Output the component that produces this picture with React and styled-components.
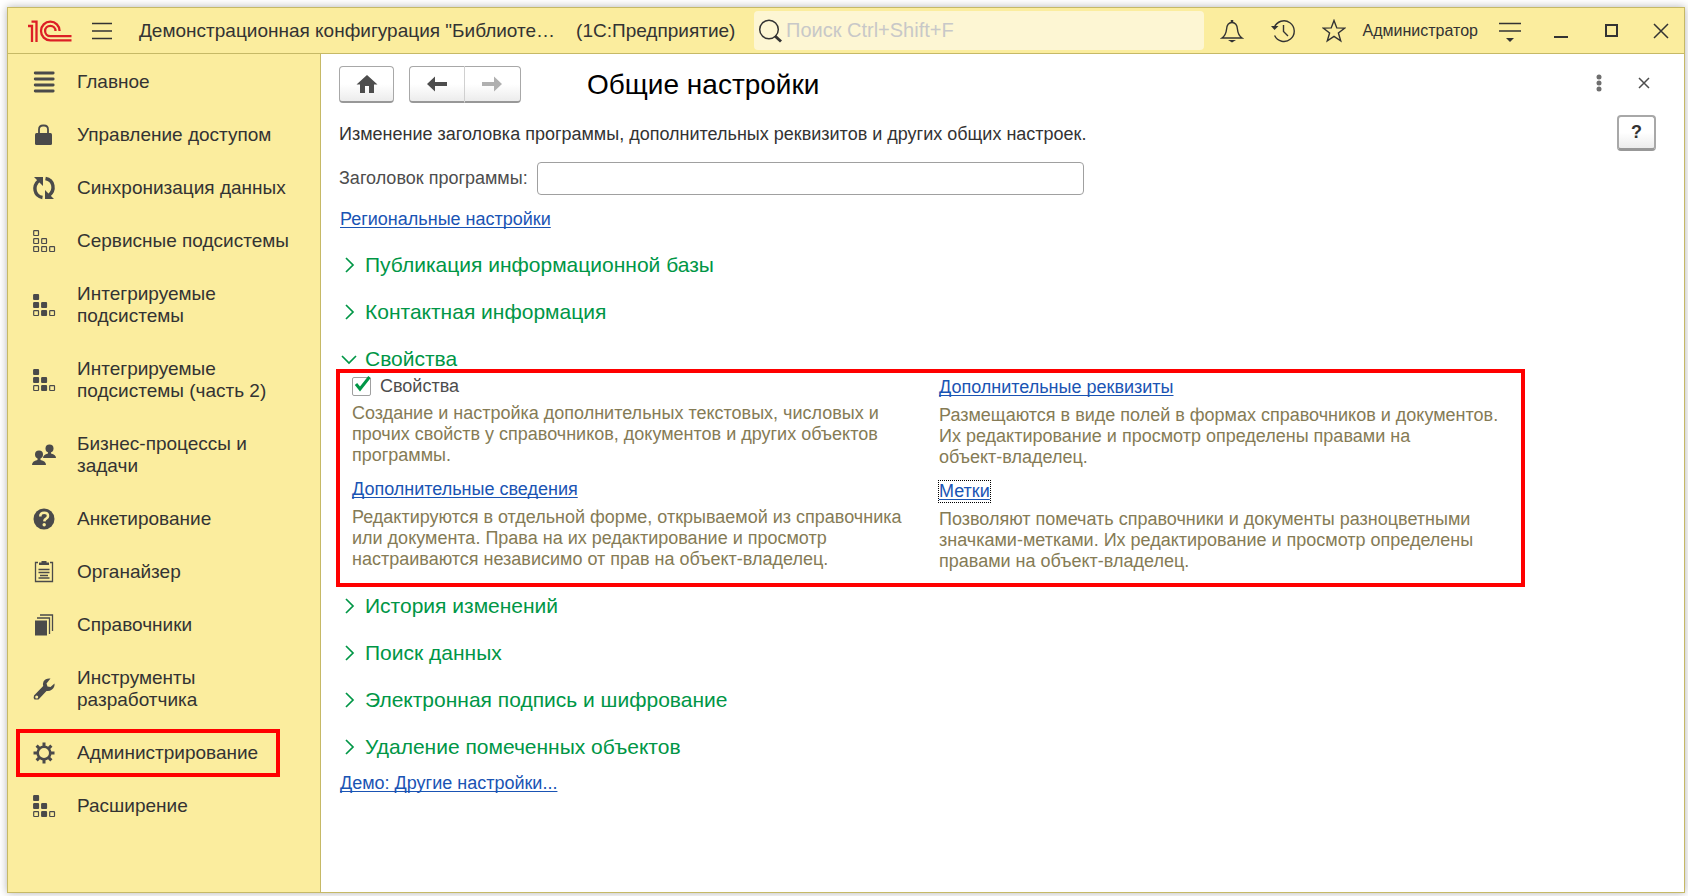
import React, { useState } from 'react';
import styled, { createGlobalStyle } from 'styled-components';

const GlobalStyle = createGlobalStyle`
  * {
    box-sizing: border-box;
  }
  html, body, #root {
    height: 100%;
  }
  body {
    margin: 0;
    background: #fff;
    font-family: "Liberation Sans", Arial, sans-serif;
    color: #333;
  }
  button, input {
    font-family: inherit;
    color: inherit;
  }
`;

const Desktop = styled.div`
  display: flex;
  min-height: 100%;
  padding: 7px 3px 3px 7px;
`;

const Window = styled.div`
  flex: 1;
  min-width: 0;
  display: flex;
  flex-direction: column;
  border: 1px solid #c6b966;
  background: #fff;
  box-shadow: 0 0 8px rgba(0, 0, 0, 0.3);
`;

const TitleBar = styled.header`
  display: flex;
  align-items: center;
  height: 46px;
  padding-left: 20px;
  background: #fbed9e;
  border-bottom: 1px solid #c6b966;
`;

const BarButton = styled.button`
  flex: none;
  display: flex;
  align-items: center;
  justify-content: center;
  width: ${(props) => props.$width || 51}px;
  height: 39px;
  padding: 0;
  border: 0;
  background: none;
`;

const AppTitle = styled.div`
  display: flex;
  gap: 21px;
  width: 602px;
  margin-left: 7px;
  font-size: 19px;
  line-height: 24px;
  white-space: nowrap;
`;

const Search = styled.label`
  flex: 1;
  display: flex;
  align-items: center;
  gap: 4px;
  height: 39px;
  margin-left: 13px;
  margin-right: 3px;
  padding-left: 4px;
  border-radius: 4px;
  background: #fdf6d3;
  input {
    flex: 1;
    min-width: 0;
    padding: 0;
    border: 0;
    outline: 0;
    background: none;
    font-size: 20px;
  }
  input::placeholder {
    color: #c8c8c8;
    opacity: 1;
  }
`;

const UserLink = styled.a`
  margin: 0 6px 0 3px;
  color: #333;
  font-size: 16px;
  text-decoration: none;
`;

const Body = styled.div`
  flex: 1;
  display: flex;
`;

const Sidebar = styled.nav`
  flex: none;
  display: flex;
  flex-direction: column;
  align-items: flex-start;
  gap: 13px;
  width: 313px;
  padding: 8px 0 8px 12px;
  background: #fbed9e;
  border-right: 1px solid #c6b966;
`;

const NavItem = styled.button`
  display: flex;
  align-items: center;
  gap: 21px;
  padding: 9px 18px 9px 12px;
  border: 0;
  background: none;
  font-size: 19px;
  line-height: 22px;
  text-align: left;
  outline: ${(props) => (props.$active ? '4px solid #f00' : 'none')};
  svg {
    flex: none;
    margin: -1px 0;
  }
`;

const Content = styled.main`
  flex: 1;
  min-width: 0;
  padding: 12px 28px 12px 18px;
`;

const PageHeader = styled.div`
  display: flex;
  align-items: center;
  height: 37px;
  margin-right: -10px;
`;

const ToolButton = styled.button`
  display: flex;
  align-items: center;
  justify-content: center;
  width: 55px;
  height: 37px;
  padding: 0;
  border: 1px solid #a8a8a8;
  border-bottom: 2px solid #989898;
  border-radius: 4px;
  background: linear-gradient(#fff 50%, #ececec);
`;

const HistoryButtons = styled.div`
  display: flex;
  margin: 0 66px 0 15px;
  ${ToolButton} {
    width: 56px;
  }
  ${ToolButton}:first-child {
    border-right-color: #d0d0d0;
    border-radius: 4px 0 0 4px;
  }
  ${ToolButton}:last-child {
    border-left: 0;
    border-radius: 0 4px 4px 0;
  }
`;

const PageTitle = styled.h1`
  flex: 1;
  margin: 0;
  color: #000;
  font-size: 28px;
  font-weight: normal;
  line-height: 32px;
`;

const PageAction = styled(BarButton)`
  width: 45px;
  height: 34px;
  align-self: flex-start;
`;

const Intro = styled.div`
  display: flex;
  justify-content: space-between;
  height: 36px;
  margin-top: 12px;
  font-size: 18px;
  line-height: 21px;
  p {
    margin: 9px 0 0;
  }
`;

const HelpButton = styled(ToolButton)`
  width: 39px;
  height: 36px;
  border-width: 2px;
  border-bottom-width: 3px;
  font-size: 18px;
  font-weight: bold;
`;

const Field = styled.div`
  display: flex;
  align-items: center;
  gap: 9px;
  margin-top: 11px;
  color: #4d4d4d;
  font-size: 18px;
  input {
    width: 547px;
    height: 33px;
    padding: 0 8px;
    border: 1px solid #a0a0a0;
    border-radius: 4px;
    font-size: 18px;
  }
`;

const TextLink = styled.a`
  color: #1a54b4;
  font-size: 18px;
  line-height: 21px;
  text-decoration: underline;
  text-decoration-thickness: 1px;
  text-decoration-skip-ink: none;
  text-underline-offset: 2px;
  outline: ${(props) => (props.$focused ? '1px dotted #000' : 'none')};
`;

const LinkRow = styled.div`
  display: flex;
  margin-top: ${(props) => props.$top}px;
  padding-left: 1px;
`;

const Sections = styled.div`
  display: flex;
  flex-direction: column;
  gap: 27px;
  margin-top: ${(props) => props.$top}px;
`;

const SectionButton = styled.button`
  display: flex;
  align-items: center;
  gap: 7px;
  height: 20px;
  padding: 0 0 0 1px;
  border: 0;
  background: none;
  color: #009646;
  font-size: 21px;
  line-height: 20px;
`;

const Group = styled.section`
  display: grid;
  grid-template-columns: 587px 1fr;
  width: 1189px;
  max-width: 100%;
  height: 218px;
  margin-left: -3px;
  padding: 3px 12px 0;
  border: 4px solid #f00;
`;

const Column = styled.div`
  display: flex;
  flex-direction: column;
  align-items: flex-start;
  padding-top: ${(props) => props.$top || 0}px;
`;

const Note = styled.p`
  margin: 7px 0 13px;
  color: #857b55;
  font-size: 18px;
  line-height: 21px;
  white-space: pre-line;
`;

const CheckLabel = styled.label`
  display: flex;
  align-items: center;
  gap: 9px;
  height: 20px;
  color: #4d4d4d;
  font-size: 18px;
  line-height: 20px;
`;

const CheckBox = styled.input`
  appearance: none;
  width: 19px;
  height: 19px;
  margin: 0;
  border: 1px solid #a0a0a0;
  border-radius: 2px;
  background: #fff;
`;

const CheckWrap = styled.span`
  position: relative;
  display: flex;
  svg {
    position: absolute;
    left: 2px;
    top: -2px;
    pointer-events: none;
  }
`;

const ink = '#4a4a4a';

function Squares({ filled }) {
  const cells = [[0, 0], [0, 1], [1, 1], [0, 2], [1, 2], [2, 2]];
  const solid = filled ? [0, 1, 2, 4] : [];
  return (
    <svg width="24" height="24" viewBox="0 0 24 24">
      {cells.map(([x, y], i) => (
        <rect
          key={i}
          x={1.7 + x * 8}
          y={1.7 + y * 8}
          width="4.8"
          height="4.8"
          rx="0.5"
          stroke={ink}
          strokeWidth="1.2"
          fill={solid.includes(i) ? ink : 'none'}
        />
      ))}
    </svg>
  );
}

const icons = {
  lines: (
    <svg width="24" height="24" viewBox="0 0 24 24" stroke={ink} strokeWidth="2.8" strokeLinecap="round">
      <path d="M3.2 3h18M3.2 9h18M3.2 15h18M3.2 21h18" />
    </svg>
  ),
  lock: (
    <svg width="24" height="24" viewBox="0 0 24 24">
      <rect x="3" y="10" width="17" height="12" rx="1.5" fill={ink} />
      <path d="M7 11V6.5q0-4 4-4h1q4 0 4 4V11" fill="none" stroke={ink} strokeWidth="1.8" />
    </svg>
  ),
  sync: (
    <svg width="24" height="24" viewBox="0 0 24 24" fill="none" stroke={ink} strokeWidth="3.4">
      <path d="M10.5 21.5C2 20 .5 10 7 4.5M13.5 2.5C22 4 23.5 14 17 19.5" />
      <path d="M2 1h9v9zM22 23h-9v-9z" fill={ink} stroke="none" />
    </svg>
  ),
  squares: <Squares />,
  blocks: <Squares filled />,
  people: (
    <svg width="24" height="24" viewBox="0 0 24 24" fill={ink}>
      <circle cx="17.5" cy="5.5" r="4" />
      <path d="M11 15q0-3.5 5-4.5V8h3v2.5q5 1 5 4.5z" />
      <circle cx="7" cy="11.5" r="4" />
      <path d="M0 22q0-4 5.5-5v-3h3v3q5.5 1 5.5 5z" />
    </svg>
  ),
  question: (
    <svg width="24" height="24" viewBox="0 0 24 24">
      <circle cx="12" cy="12" r="10.5" fill={ink} />
      <path d="M8.3 9.5q0-3.7 3.9-3.7t3.8 3.2q0 1.7-1.8 2.7t-1.9 2.6" fill="none" stroke="#fbed9e" strokeWidth="2.6" />
      <circle cx="12.2" cy="17.7" r="1.7" fill="#fbed9e" />
    </svg>
  ),
  clipboard: (
    <svg width="24" height="24" viewBox="0 0 24 24" fill="none" stroke={ink} strokeWidth="1.3">
      <path d="M6 2.5H3.5v19h17v-19H18" />
      <path d="M7 5V2.5h2.5V1h5v1.5H17V5z" fill={ink} stroke="none" />
      <path d="M6.5 9.5h11M6.5 12.5h11M8 15.5h8M6.5 18h11" />
    </svg>
  ),
  books: (
    <svg width="24" height="24" viewBox="0 0 24 24" fill="none" stroke={ink} strokeWidth="1.3">
      <rect x="3" y="7.5" width="12" height="15" fill={ink} stroke="none" />
      <path d="M5 5h12.5v16M8 2h12.5v16" />
    </svg>
  ),
  wrench: (
    <svg width="24" height="24" viewBox="0 0 24 24">
      <path
        d="M18.5 1.5q-5-.5-7 3-1 2.500-.3 4.500L2 18.500q-1 3 .5 4h4l8-8.500q3 .5 5.500-1.500 3-2.500 2.500-6l-4 3.500-3-.5-1-3z"
        fill={ink}
      />
      <circle cx="4.7" cy="20" r="1.5" fill="#fbed9e" />
    </svg>
  ),
  gear: (
    <svg width="24" height="24" viewBox="0 0 24 24" fill="none" stroke={ink}>
      <circle cx="12" cy="12" r="6.3" strokeWidth="2.6" />
      <path
        d="M12 1.5v4M12 18.5v4M1.5 12h4M18.5 12h4M4.6 4.6l2.8 2.8M16.6 16.6l2.8 2.8M19.4 4.6l-2.8 2.8M7.4 16.6l-2.8 2.8"
        strokeWidth="3"
      />
    </svg>
  ),
};

const menu = [
  { icon: 'lines', text: 'Главное' },
  { icon: 'lock', text: 'Управление доступом' },
  { icon: 'sync', text: 'Синхронизация данных' },
  { icon: 'squares', text: 'Сервисные подсистемы' },
  { icon: 'blocks', text: 'Интегрируемые подсистемы' },
  { icon: 'blocks', text: 'Интегрируемые подсистемы (часть 2)' },
  { icon: 'people', text: 'Бизнес-процессы и задачи' },
  { icon: 'question', text: 'Анкетирование' },
  { icon: 'clipboard', text: 'Органайзер' },
  { icon: 'books', text: 'Справочники' },
  { icon: 'wrench', text: 'Инструменты разработчика' },
  { icon: 'gear', text: 'Администрирование', active: true },
  { icon: 'blocks', text: 'Расширение' },
];

function Logo() {
  return (
    <svg width="44" height="24" viewBox="0 0 44 24" fill="none" stroke="#dc1f26" strokeWidth="2.3">
      <path d="M0 7h4v16M3.5 2.7h5V23" />
      <path d="M31.6 12a9.3 9.3 0 1 0-9.3 9.3H43.5M27.5 12a5.2 5.2 0 1 0-5.2 5.2H43.5" />
    </svg>
  );
}

function Section({ title, open }) {
  return (
    <SectionButton type="button" aria-expanded={Boolean(open)}>
      <svg width="18" height="18" viewBox="0 0 18 18" fill="none" stroke="#009646" strokeWidth="1.7">
        <path d={open ? 'M2 6l7 7 7-7' : 'M6 2l7 7-7 7'} />
      </svg>
      {title}
    </SectionButton>
  );
}

function Header() {
  return (
    <TitleBar>
      <Logo />
      <BarButton $width={60} aria-label="Меню">
        <svg width="22" height="18" viewBox="0 0 22 18" stroke="#333" strokeWidth="1.4">
          <path d="M1 1.5h20M1 9h20M1 16.5h20" />
        </svg>
      </BarButton>
      <AppTitle>
        <span>Демонстрационная конфигурация "Библиоте…</span>
        <span>(1С:Предприятие)</span>
      </AppTitle>
      <Search>
        <svg width="24" height="24" viewBox="0 0 24 24" fill="none" stroke="#333">
          <circle cx="11" cy="10.5" r="9.3" strokeWidth="1.5" />
          <path d="M17 17l6 5.5" strokeWidth="3" />
        </svg>
        <input type="text" placeholder="Поиск Ctrl+Shift+F" aria-label="Поиск" />
      </Search>
      <BarButton aria-label="Уведомления">
        <svg width="24" height="24" viewBox="0 0 24 24" fill="none" stroke="#333" strokeWidth="1.4">
          <path d="M2 19q4-3 4.5-8.5Q7 3.5 12 3.5t5.5 7Q18 16 22 19z" />
          <path d="M12 1v2.5" strokeWidth="2.5" />
          <path d="M8 21h8l-4 2.5z" fill="#333" stroke="none" />
        </svg>
      </BarButton>
      <BarButton aria-label="История">
        <svg width="24" height="24" viewBox="0 0 24 24" fill="none" stroke="#333" strokeWidth="1.4">
          <path d="M3.3 8.5a10.3 10.3 0 1 1 .3 8" />
          <path d="M12.5 6v6.5l4.5 4.5" />
          <path d="M0 7h7.5L3.5 11z" fill="#333" stroke="none" />
        </svg>
      </BarButton>
      <BarButton aria-label="Избранное">
        <svg width="24" height="24" viewBox="0 0 24 24" fill="none" stroke="#333" strokeWidth="1.4">
          <path d="M12 1.5l2.8 7.4 8 .2-6.4 4.9 2.3 7.8L12 17.3l-6.7 4.5 2.3-7.8-6.4-4.9 8-.2z" />
        </svg>
      </BarButton>
      <UserLink href="#user">Администратор</UserLink>
      <BarButton aria-label="Сервис">
        <svg width="24" height="24" viewBox="0 0 24 24" fill="none" stroke="#333" strokeWidth="1.5">
          <path d="M1 4.5h22M1 12h22" />
          <path d="M8 19h8l-4 4z" fill="#333" stroke="none" />
        </svg>
      </BarButton>
      <BarButton aria-label="Свернуть">
        <svg width="16" height="16" viewBox="0 0 16 16" stroke="#333" strokeWidth="2">
          <path d="M1 14h14" />
        </svg>
      </BarButton>
      <BarButton aria-label="Развернуть">
        <svg width="16" height="16" viewBox="0 0 16 16" fill="none" stroke="#333" strokeWidth="2">
          <path d="M2 2h11v11H2z" />
        </svg>
      </BarButton>
      <BarButton $width={47} aria-label="Закрыть">
        <svg width="16" height="16" viewBox="0 0 16 16" stroke="#333" strokeWidth="1.5">
          <path d="M1 1l14 14M15 1L1 15" />
        </svg>
      </BarButton>
    </TitleBar>
  );
}

function PropertiesGroup() {
  const [enabled, setEnabled] = useState(true);

  return (
    <Group>
      <Column>
        <CheckLabel>
          <CheckWrap>
            <CheckBox type="checkbox" checked={enabled} onChange={(e) => setEnabled(e.target.checked)} />
            {enabled && (
              <svg width="18" height="18" viewBox="0 0 18 18" fill="none" stroke="#009646" strokeWidth="3">
                <path d="M2 9l4 5L15.5 2" />
              </svg>
            )}
          </CheckWrap>
          Свойства
        </CheckLabel>
        <Note>
          {'Создание и настройка дополнительных текстовых, числовых и\nпрочих свойств у справочников, документов и других объектов\nпрограммы.'}
        </Note>
        <TextLink href="#info">Дополнительные сведения</TextLink>
        <Note>
          {'Редактируются в отдельной форме, открываемой из справочника\nили документа. Права на их редактирование и просмотр\nнастраиваются независимо от прав на объект-владелец.'}
        </Note>
      </Column>
      <Column $top={1}>
        <TextLink href="#attributes">Дополнительные реквизиты</TextLink>
        <Note>
          {'Размещаются в виде полей в формах справочников и документов.\nИх редактирование и просмотр определены правами на\nобъект-владелец.'}
        </Note>
        <TextLink href="#labels" $focused>Метки</TextLink>
        <Note>
          {'Позволяют помечать справочники и документы разноцветными\nзначками-метками. Их редактирование и просмотр определены\nправами на объект-владелец.'}
        </Note>
      </Column>
    </Group>
  );
}

export default function App() {
  return (
    <Desktop>
      <GlobalStyle />
      <Window>
        <Header />
        <Body>
          <Sidebar>
            {menu.map((item) => (
              <NavItem key={item.text} type="button" $active={item.active}>
                {icons[item.icon]}
                <span>{item.text}</span>
              </NavItem>
            ))}
          </Sidebar>
          <Content>
            <PageHeader>
              <ToolButton aria-label="Начальная страница">
                <svg width="22" height="20" viewBox="0 0 22 20" fill="#4d4d4d">
                  <path d="M11 1l10.5 9.5H18V19h-5v-7H9v7H4v-8.5H.5z" />
                </svg>
              </ToolButton>
              <HistoryButtons>
                <ToolButton aria-label="Назад">
                  <svg width="22" height="16" viewBox="0 0 22 16" fill="#4d4d4d">
                    <path d="M1 8l8-7.5V6h12v4H9v5.5z" />
                  </svg>
                </ToolButton>
                <ToolButton aria-label="Вперед">
                  <svg width="22" height="16" viewBox="0 0 22 16" fill="#b0b0b0">
                    <path d="M20 8l-8-7.5V6H0v4h12v5.5z" />
                  </svg>
                </ToolButton>
              </HistoryButtons>
              <PageTitle>Общие настройки</PageTitle>
              <PageAction aria-label="Еще">
                <svg width="6" height="18" viewBox="0 0 6 18" fill="#6e6e6e">
                  <circle cx="3" cy="3" r="2.5" />
                  <circle cx="3" cy="9" r="2.5" />
                  <circle cx="3" cy="15" r="2.5" />
                </svg>
              </PageAction>
              <PageAction aria-label="Закрыть форму">
                <svg width="12" height="12" viewBox="0 0 12 12" stroke="#4d4d4d" strokeWidth="1.5">
                  <path d="M1 1l10 10M11 1L1 11" />
                </svg>
              </PageAction>
            </PageHeader>
            <Intro>
              <p>Изменение заголовка программы, дополнительных реквизитов и других общих настроек.</p>
              <HelpButton>?</HelpButton>
            </Intro>
            <Field>
              <label htmlFor="app-title">Заголовок программы:</label>
              <input id="app-title" type="text" />
            </Field>
            <LinkRow $top={14}>
              <TextLink href="#regional">Региональные настройки</TextLink>
            </LinkRow>
            <Sections $top={25}>
              <Section title="Публикация информационной базы" />
              <Section title="Контактная информация" />
              <Section title="Свойства" open />
            </Sections>
            <PropertiesGroup />
            <Sections $top={9}>
              <Section title="История изменений" />
              <Section title="Поиск данных" />
              <Section title="Электронная подпись и шифрование" />
              <Section title="Удаление помеченных объектов" />
            </Sections>
            <LinkRow $top={16}>
              <TextLink href="#demo">Демо: Другие настройки...</TextLink>
            </LinkRow>
          </Content>
        </Body>
      </Window>
    </Desktop>
  );
}
